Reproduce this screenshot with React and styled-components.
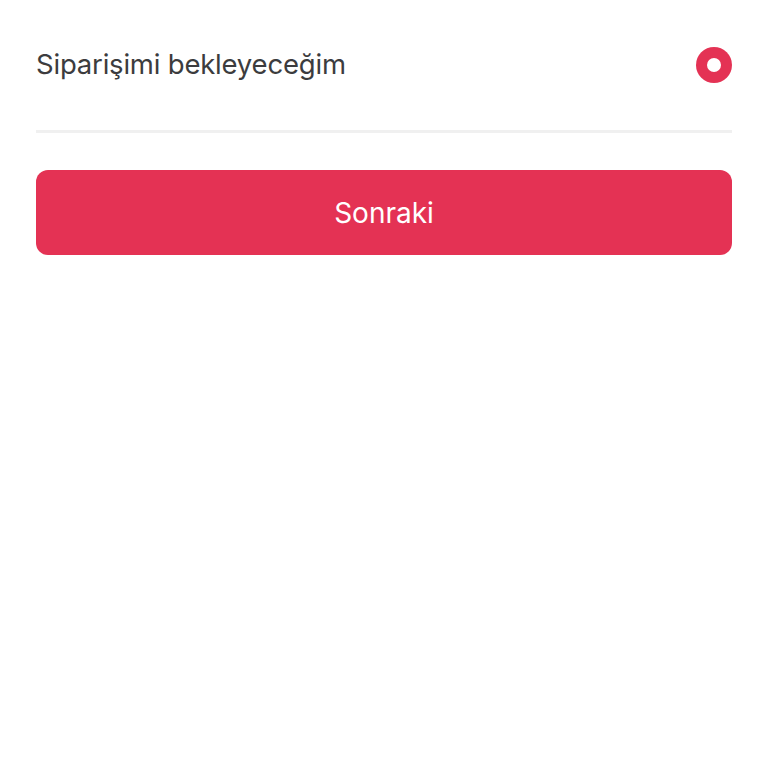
import React, { useState } from "react";
import styled, { createGlobalStyle } from "styled-components";

const GlobalStyle = createGlobalStyle`
    html, body {
        margin: 0;
        padding: 0;
        background: #ffffff;
        font-family: Inter, "Noto Sans", Roboto, sans-serif;
    }
`;

const Page = styled.div`
    display: flex;
    flex-direction: column;
    width: 768px;
    min-height: 768px;
    padding: 0 36px;
    box-sizing: border-box;
`;

const OptionRow = styled.label`
    display: flex;
    align-items: center;
    justify-content: space-between;
    height: 130px;
    border-bottom: 3px solid #f0f0f0;
    cursor: pointer;
`;

const OptionText = styled.span`
    font-size: 27.5px;
    color: #3c3c3e;
    letter-spacing: -0.2px;
    margin-top: -3px;
`;

const Radio = styled.span`
    width: 36px;
    height: 36px;
    border-radius: 50%;
    background: ${props => (props.checked ? "#e43254" : "#d0d0d0")};
    display: flex;
    align-items: center;
    justify-content: center;

    &::after {
        content: '';
        width: 14px;
        height: 14px;
        border-radius: 50%;
        background: #ffffff;
    }
`;

const NextButton = styled.button`
    display: flex;
    align-items: center;
    justify-content: center;
    height: 85px;
    margin-top: 37px;
    border: none;
    border-radius: 12px;
    background-color: #e43254;
    color: #ffffff;
    font-family: inherit;
    font-size: 28px;
    cursor: pointer;
`;

export default function App() {
    const [checked, setChecked] = useState(true);

    return (
        <>
            <GlobalStyle />
            <Page>
                <OptionRow onClick={() => setChecked(true)}>
                    <OptionText>Siparişimi bekleyeceğim</OptionText>
                    <Radio checked={checked} />
                </OptionRow>
                <NextButton>Sonraki</NextButton>
            </Page>
        </>
    );
}
